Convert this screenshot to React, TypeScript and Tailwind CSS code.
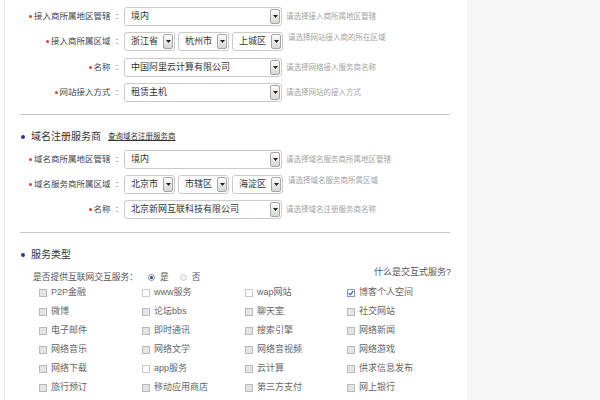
import React from 'react';

const font = "font-['Liberation_Sans','Noto_Sans_CJK_SC',sans-serif]";

function Arrow() {
  return (
    <div className="w-[10px] h-[15px] shrink-0 flex items-center justify-center border border-[#a5a5a5] rounded-[2px] bg-linear-to-b from-[#fdfdfd] to-[#d6d6d6]">
      <svg width="5" height="3" viewBox="0 0 5 3">
        <path d="M0 0h5L2.5 3z" fill="#222" />
      </svg>
    </div>
  );
}

function Select({ value, w }: { value: string; w: string }) {
  return (
    <div
      className={`${w} h-[19px] shrink-0 flex items-center justify-between border border-[#cbcbcb] rounded-[3px] bg-white pl-[6px] pr-px`}
    >
      <span className="text-[9px] leading-none text-[#333] whitespace-nowrap">{value}</span>
      <Arrow />
    </div>
  );
}

function Label({ text }: { text: string }) {
  return (
    <div className="w-[115px] shrink-0 flex items-center justify-end text-[8.5px] leading-none text-[#444] whitespace-nowrap">
      <span className="w-[3px] h-[3px] rounded-full bg-[#e8412c] mr-[2px]" />
      <span>{text}</span>
      <span className="ml-[5px] mr-[2px]">:</span>
    </div>
  );
}

function Hint({ text, top }: { text: string; top?: boolean }) {
  return (
    <span
      className={
        top
          ? 'ml-[5px] self-start mt-[1px] text-[7.5px] leading-[10px] text-[#a3a3a3] whitespace-nowrap'
          : 'ml-[4px] text-[7.5px] leading-[10px] text-[#a3a3a3] whitespace-nowrap'
      }
    >
      {text}
    </span>
  );
}

function FieldRow({ label, value, hint, mt }: { label: string; value: string; hint: string; mt: string }) {
  return (
    <div className={`${mt} flex items-center h-[19px]`}>
      <Label text={label} />
      <div className="ml-[4px] flex items-center">
        <Select value={value} w="w-[158px]" />
      </div>
      <Hint text={hint} />
    </div>
  );
}

function AreaRow({ label, values, hint, mt }: { label: string; values: string[]; hint: string; mt: string }) {
  return (
    <div className={`${mt} flex items-center h-[19px]`}>
      <Label text={label} />
      <div className="ml-[4px] flex items-center gap-[3px]">
        {values.map((v) => (
          <Select key={v} value={v} w="w-[51px]" />
        ))}
      </div>
      <Hint text={hint} top />
    </div>
  );
}

function Divider({ mt }: { mt: string }) {
  return <div className={`${mt} ml-[15px] w-[430px] h-px bg-[#c3c8d0]`} />;
}

function Heading({ title, link, mt }: { title: string; link?: string; mt: string }) {
  return (
    <div className={`${mt} pl-[16px] h-[14px] flex items-center`}>
      <span className="w-[4px] h-[4px] rounded-full bg-[#26398c]" />
      <span className="ml-[6px] text-[10px] leading-none text-[#333]">{title}</span>
      {link && (
        <a href="#" className="ml-[7px] text-[7.5px] leading-none text-[#333] underline">
          {link}
        </a>
      )}
    </div>
  );
}

type Box = { text: string; kind: 'gray' | 'white' | 'checked' };

const services: Box[][] = [
  [
    { text: 'P2P金融', kind: 'gray' },
    { text: 'www服务', kind: 'white' },
    { text: 'wap网站', kind: 'white' },
    { text: '博客个人空间', kind: 'checked' },
  ],
  [
    { text: '微博', kind: 'gray' },
    { text: '论坛bbs', kind: 'gray' },
    { text: '聊天室', kind: 'gray' },
    { text: '社交网站', kind: 'gray' },
  ],
  [
    { text: '电子邮件', kind: 'gray' },
    { text: '即时通讯', kind: 'gray' },
    { text: '搜索引擎', kind: 'gray' },
    { text: '网络新闻', kind: 'gray' },
  ],
  [
    { text: '网络音乐', kind: 'gray' },
    { text: '网络文学', kind: 'gray' },
    { text: '网络音视频', kind: 'gray' },
    { text: '网络游戏', kind: 'gray' },
  ],
  [
    { text: '网络下载', kind: 'gray' },
    { text: 'app服务', kind: 'white' },
    { text: '云计算', kind: 'gray' },
    { text: '供求信息发布', kind: 'gray' },
  ],
  [
    { text: '旅行预订', kind: 'gray' },
    { text: '移动应用商店', kind: 'gray' },
    { text: '第三方支付', kind: 'gray' },
    { text: '网上银行', kind: 'gray' },
  ],
];

function Checkbox({ kind }: { kind: Box['kind'] }) {
  if (kind === 'checked') {
    return (
      <span className="w-[8px] h-[8px] shrink-0 border border-[#8c9ab0] bg-white flex items-center justify-center">
        <svg width="6" height="6" viewBox="0 0 6 6">
          <path d="M0.6 3.2L2.3 4.9L5.4 0.9" fill="none" stroke="#2b5fb3" strokeWidth="1.2" />
        </svg>
      </span>
    );
  }
  if (kind === 'white') {
    return <span className="w-[8px] h-[8px] shrink-0 border border-[#c9c9c9] bg-white" />;
  }
  return <span className="w-[8px] h-[8px] shrink-0 border border-[#b9b9b9] bg-[#e4e4e4]" />;
}

function Radio({ on }: { on: boolean }) {
  return on ? (
    <span className="w-[7px] h-[7px] rounded-full border border-[#8f8f8f] bg-[#eeeeee] flex items-center justify-center">
      <span className="w-[3px] h-[3px] rounded-full bg-[#1f4f9f]" />
    </span>
  ) : (
    <span className="block w-[7px] h-[7px] rounded-full border border-[#cfcfcf] bg-[#f2f2f2]" />
  );
}

export default function App() {
  return (
    <div className={`w-[600px] h-[400px] overflow-hidden flex bg-white ${font}`}>
      <div className="w-[4px] shrink-0 bg-white" />
      <div className="w-[463px] shrink-0 border-l border-[#e6e6e6] bg-white pt-[7px]">
        <FieldRow label="接入商所属地区管辖" value="境内" hint="请选择接入商所属地区管辖" mt="mt-0" />
        <AreaRow label="接入商所属区域" values={['浙江省', '杭州市', '上城区']} hint="请选择网站接入商的所在区域" mt="mt-[6px]" />
        <FieldRow label="名称" value="中国阿里云计算有限公司" hint="请选择网络接入服务商名称" mt="mt-[7px]" />
        <FieldRow label="网站接入方式" value="租赁主机" hint="请选择网站的接入方式" mt="mt-[6px]" />

        <Divider mt="mt-[12px]" />
        <Heading title="域名注册服务商" link="查询域名注册服务商" mt="mt-[15px]" />
        <FieldRow label="域名商所属地区管辖" value="境内" hint="请选择域名服务商所属地区管辖" mt="mt-[6px]" />
        <AreaRow label="域名服务商所属区域" values={['北京市', '市辖区', '海淀区']} hint="请选择域名服务商所属区域" mt="mt-[6px]" />
        <FieldRow label="名称" value="北京新网互联科技有限公司" hint="请选择域名注册服务商名称" mt="mt-[6px]" />

        <Divider mt="mt-[13px]" />
        <Heading title="服务类型" mt="mt-[15px]" />
        <div className="mt-[9px] h-[12px] pl-[28px] pr-[16px] flex items-center justify-between text-[8.75px] leading-none text-[#555]">
          <div className="flex items-center">
            <span>是否提供互联网交互服务：</span>
            <span className="ml-[10px]">
              <Radio on />
            </span>
            <span className="ml-[5px]">是</span>
            <span className="ml-[11px]">
              <Radio on={false} />
            </span>
            <span className="ml-[5px]">否</span>
          </div>
          <a href="#" className="self-start -mt-[3px] text-[9px] leading-none text-[#555]">
            什么是交互式服务?
          </a>
        </div>
        <div className="pl-[34px]">
          {services.map((row, i) => (
            <div key={i} className="h-[19px] grid grid-cols-[103px_103px_102px_auto] items-center">
              {row.map((b) => (
                <div key={b.text} className="flex items-center">
                  <Checkbox kind={b.kind} />
                  <span className="ml-[4px] text-[9px] leading-none text-[#666] whitespace-nowrap">{b.text}</span>
                </div>
              ))}
            </div>
          ))}
        </div>
      </div>
      <div className="flex-1 bg-[#f7f7f7]" />
    </div>
  );
}
